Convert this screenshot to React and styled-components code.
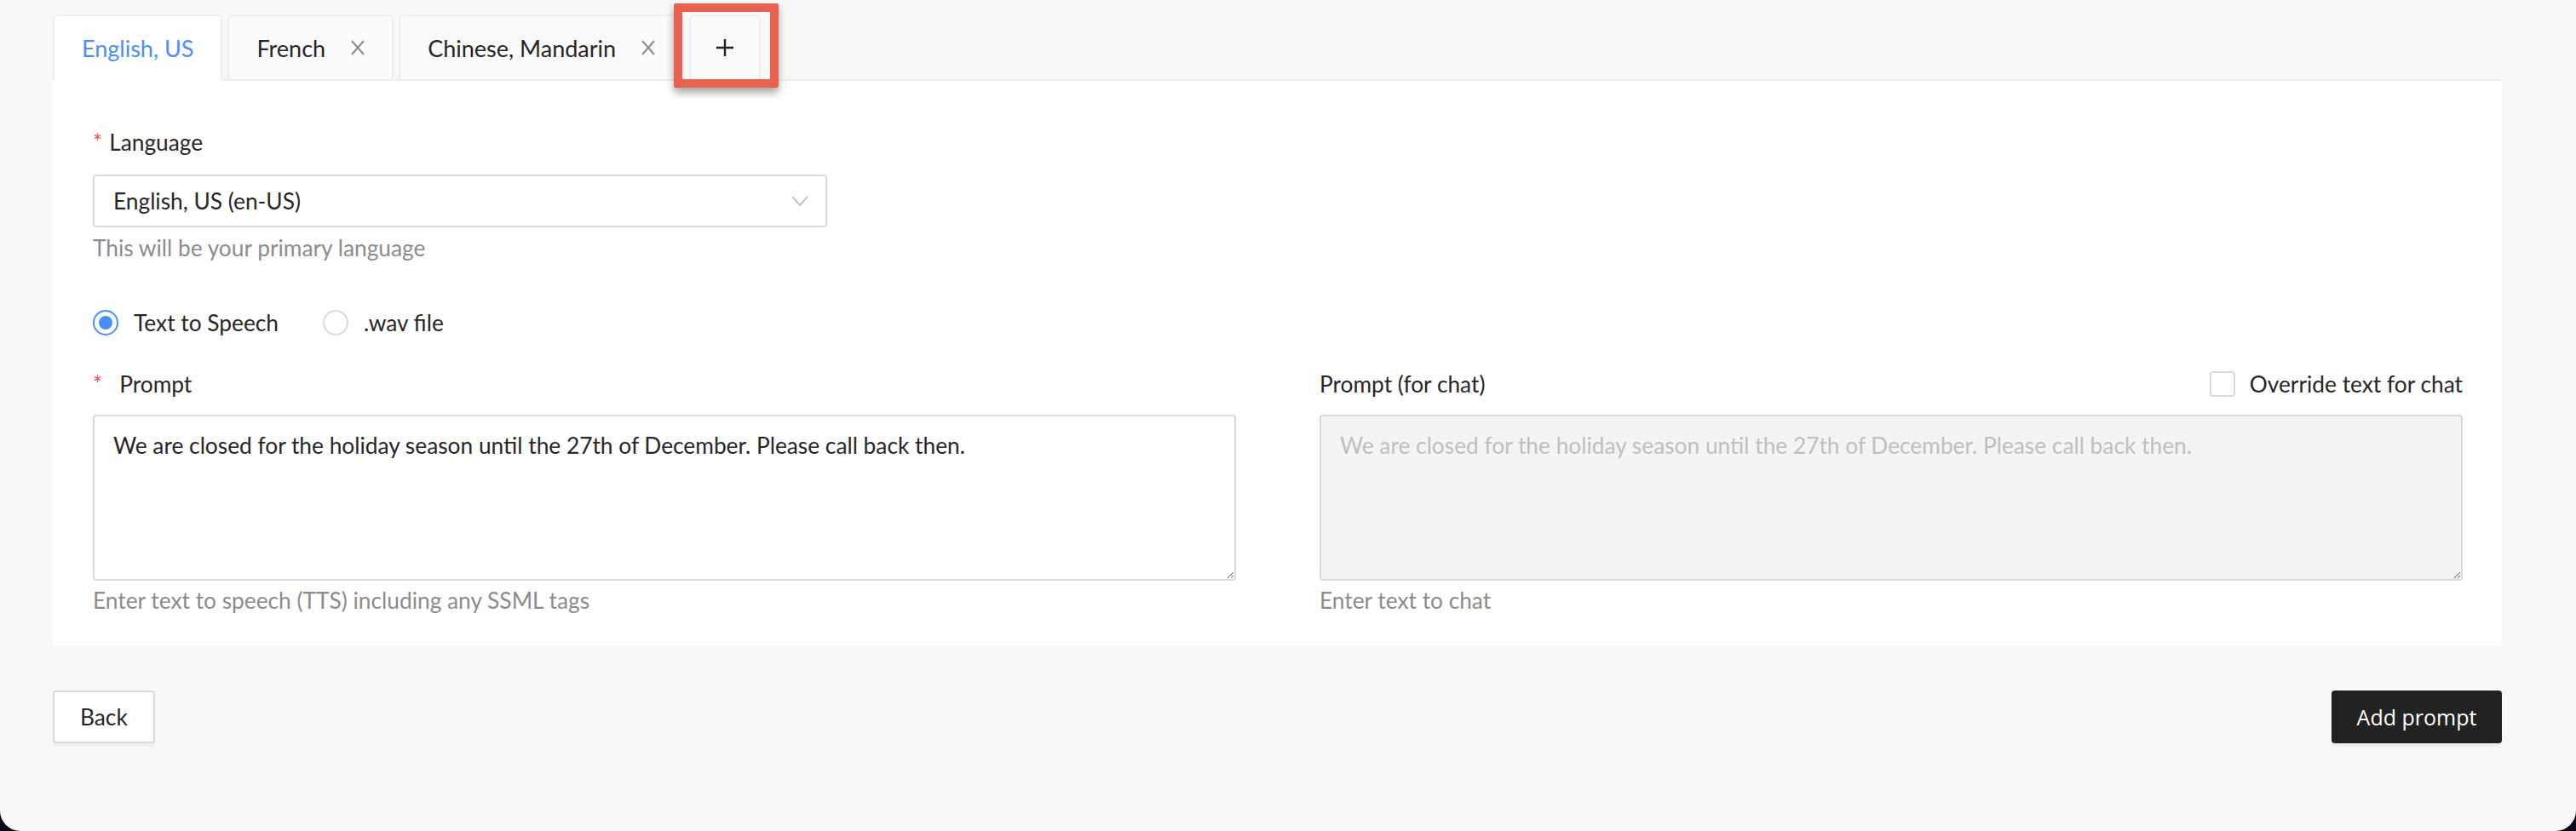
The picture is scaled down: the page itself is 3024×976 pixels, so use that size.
import styled, { createGlobalStyle } from "styled-components";

const GlobalStyle = createGlobalStyle`
  html, body {
    margin: 0;
    background: #0b0718;
  }
  body {
    font-family: Lato, "Open Sans", sans-serif;
    color: #262626;
  }
`;

const TEXT = 26.3;

const Window = styled.div`
  height: 976px;
  box-sizing: border-box;
  background: #f8f8f8;
  border-radius: 0 0 24px 24px;
  padding: 17px 87px 0 62px;
`;

const TabBar = styled.div`
  display: flex;
  align-items: flex-end;
  gap: 6px;
  height: 78px;
  background: linear-gradient(#eeeeee, #eeeeee) bottom / 100% 2px no-repeat;
`;

const Tab = styled.div`
  position: relative;
  display: flex;
  align-items: center;
  gap: 30px;
  height: 78px;
  box-sizing: border-box;
  padding: 0 ${(p) => p.$pad || 32}px;
  border: 2px solid #ededed;
  border-bottom-color: ${(p) => (p.$active ? "#fff" : "#ededed")};
  border-radius: 6px 6px 0 0;
  background: ${(p) => (p.$active ? "#fff" : "#fafafa")};
  color: ${(p) => (p.$active ? "#4a8ff7" : "#262626")};
  font-size: 27px;
`;

const Callout = styled.div`
  position: absolute;
  left: -20px;
  top: -15px;
  width: 123px;
  height: 99px;
  box-sizing: border-box;
  border: 10px solid #e8624f;
  border-radius: 2px;
  box-shadow: 0 6px 10px rgba(0, 0, 0, 0.35);
  pointer-events: none;
`;

const Panel = styled.div`
  background: #fff;
  padding: 52px 46px 34px 47px;
`;

const Label = styled.div`
  display: flex;
  align-items: center;
  font-size: ${TEXT}px;
  line-height: 40px;
`;

const Star = styled.span`
  color: #ff4d4f;
  margin-right: ${(p) => p.$gap || 8}px;
`;

const Help = styled.div`
  color: #8c8c8c;
  font-size: ${TEXT}px;
  line-height: 40px;
  margin-top: ${(p) => p.$top || 4}px;
`;

const Select = styled.div`
  display: flex;
  align-items: center;
  justify-content: space-between;
  width: 862px;
  height: 62px;
  box-sizing: border-box;
  margin-top: 18px;
  padding: 0 20px 0 22px;
  border: 2px solid #d9d9d9;
  border-radius: 4px;
  font-size: ${TEXT}px;
`;

const RadioRow = styled.div`
  display: flex;
  align-items: center;
  gap: 52px;
  height: 40px;
  margin-top: 48px;
  font-size: ${TEXT}px;
`;

const RadioOption = styled.label`
  display: flex;
  align-items: center;
  gap: 18px;
`;

const RadioDot = styled.span`
  width: 30px;
  height: 30px;
  box-sizing: border-box;
  border-radius: 50%;
  border: 2px solid ${(p) => (p.$checked ? "#4a8ff7" : "#d9d9d9")};
  display: flex;
  align-items: center;
  justify-content: center;
  &::after {
    content: "";
    width: 16px;
    height: 16px;
    border-radius: 50%;
    background: ${(p) => (p.$checked ? "#4a8ff7" : "transparent")};
  }
`;

const Columns = styled.div`
  display: grid;
  grid-template-columns: 1fr 1fr;
  gap: 98px;
  margin-top: 32px;
`;

const LabelRow = styled.div`
  display: flex;
  align-items: center;
  justify-content: space-between;
  height: 40px;
  font-size: ${TEXT}px;
`;

const CheckLabel = styled.label`
  display: flex;
  align-items: center;
  gap: 17px;
`;

const CheckBox = styled.span`
  width: 30px;
  height: 30px;
  box-sizing: border-box;
  border: 2px solid #d9d9d9;
  border-radius: 4px;
  background: #fff;
`;

const TextArea = styled.textarea`
  display: block;
  width: 100%;
  height: 195px;
  box-sizing: border-box;
  margin-top: 16px;
  padding: 14px 22px;
  border: 2px solid #d9d9d9;
  border-radius: 4px;
  font-family: inherit;
  font-size: ${TEXT}px;
  line-height: 40px;
  color: #262626;
  background: ${(p) => (p.disabled ? "#f4f4f4" : "#fff")};
  resize: vertical;
  outline: none;
  &::placeholder {
    color: #bfbfbf;
  }
`;

const Footer = styled.div`
  display: flex;
  justify-content: space-between;
  align-items: center;
  margin-top: 52px;
`;

const Button = styled.button`
  height: 62px;
  box-sizing: border-box;
  width: ${(p) => (p.$primary ? "200px" : "auto")};
  padding: 0 ${(p) => (p.$primary ? 0 : 30)}px;
  border: 2px solid ${(p) => (p.$primary ? "#222" : "#d9d9d9")};
  border-radius: 4px;
  background: ${(p) => (p.$primary ? "#222" : "#fff")};
  color: ${(p) => (p.$primary ? "#fff" : "#262626")};
  font-family: ${(p) => (p.$primary ? '"Open Sans", sans-serif' : "inherit")};
  font-size: ${(p) => (p.$primary ? 25 : TEXT)}px;
  box-shadow: 0 4px 0 rgba(0, 0, 0, 0.04);
`;

const CloseIcon = () => (
  <svg width="16" height="18" viewBox="0 0 16 18">
    <path d="M1 1 L15 17 M15 1 L1 17" stroke="#8c8c8c" strokeWidth="2" fill="none" />
  </svg>
);

const PlusIcon = () => (
  <svg width="20" height="20" viewBox="0 0 20 20">
    <path d="M10 0 V20 M0 10 H20" stroke="#222" strokeWidth="2.4" fill="none" />
  </svg>
);

const Chevron = () => (
  <svg width="20" height="12" viewBox="0 0 20 12">
    <path d="M1 1 L10 11 L19 1" stroke="#b5b5b5" strokeWidth="1.6" fill="none" />
  </svg>
);

const promptText =
  "We are closed for the holiday season until the 27th of December. Please call back then.";

export default function App() {
  return (
    <>
      <GlobalStyle />
      <Window>
        <TabBar>
          <Tab $active>English, US</Tab>
          <Tab>
            French <CloseIcon />
          </Tab>
          <Tab>
            Chinese, Mandarin <CloseIcon />
          </Tab>
          <Tab $pad={30}>
            <PlusIcon />
            <Callout />
          </Tab>
        </TabBar>

        <Panel>
          <Label>
            <Star>*</Star>Language
          </Label>
          <Select>
            English, US (en-US)
            <Chevron />
          </Select>
          <Help>This will be your primary language</Help>

          <RadioRow>
            <RadioOption>
              <RadioDot $checked />
              Text to Speech
            </RadioOption>
            <RadioOption>
              <RadioDot />
              .wav file
            </RadioOption>
          </RadioRow>

          <Columns>
            <div>
              <LabelRow>
                <Label>
                  <Star $gap={20}>*</Star>Prompt
                </Label>
              </LabelRow>
              <TextArea defaultValue={promptText} />
              <Help $top={3}>Enter text to speech (TTS) including any SSML tags</Help>
            </div>
            <div>
              <LabelRow>
                <span>Prompt (for chat)</span>
                <CheckLabel>
                  <CheckBox />
                  Override text for chat
                </CheckLabel>
              </LabelRow>
              <TextArea disabled placeholder={promptText} />
              <Help $top={3}>Enter text to chat</Help>
            </div>
          </Columns>
        </Panel>

        <Footer>
          <Button>Back</Button>
          <Button $primary>Add prompt</Button>
        </Footer>
      </Window>
    </>
  );
}
